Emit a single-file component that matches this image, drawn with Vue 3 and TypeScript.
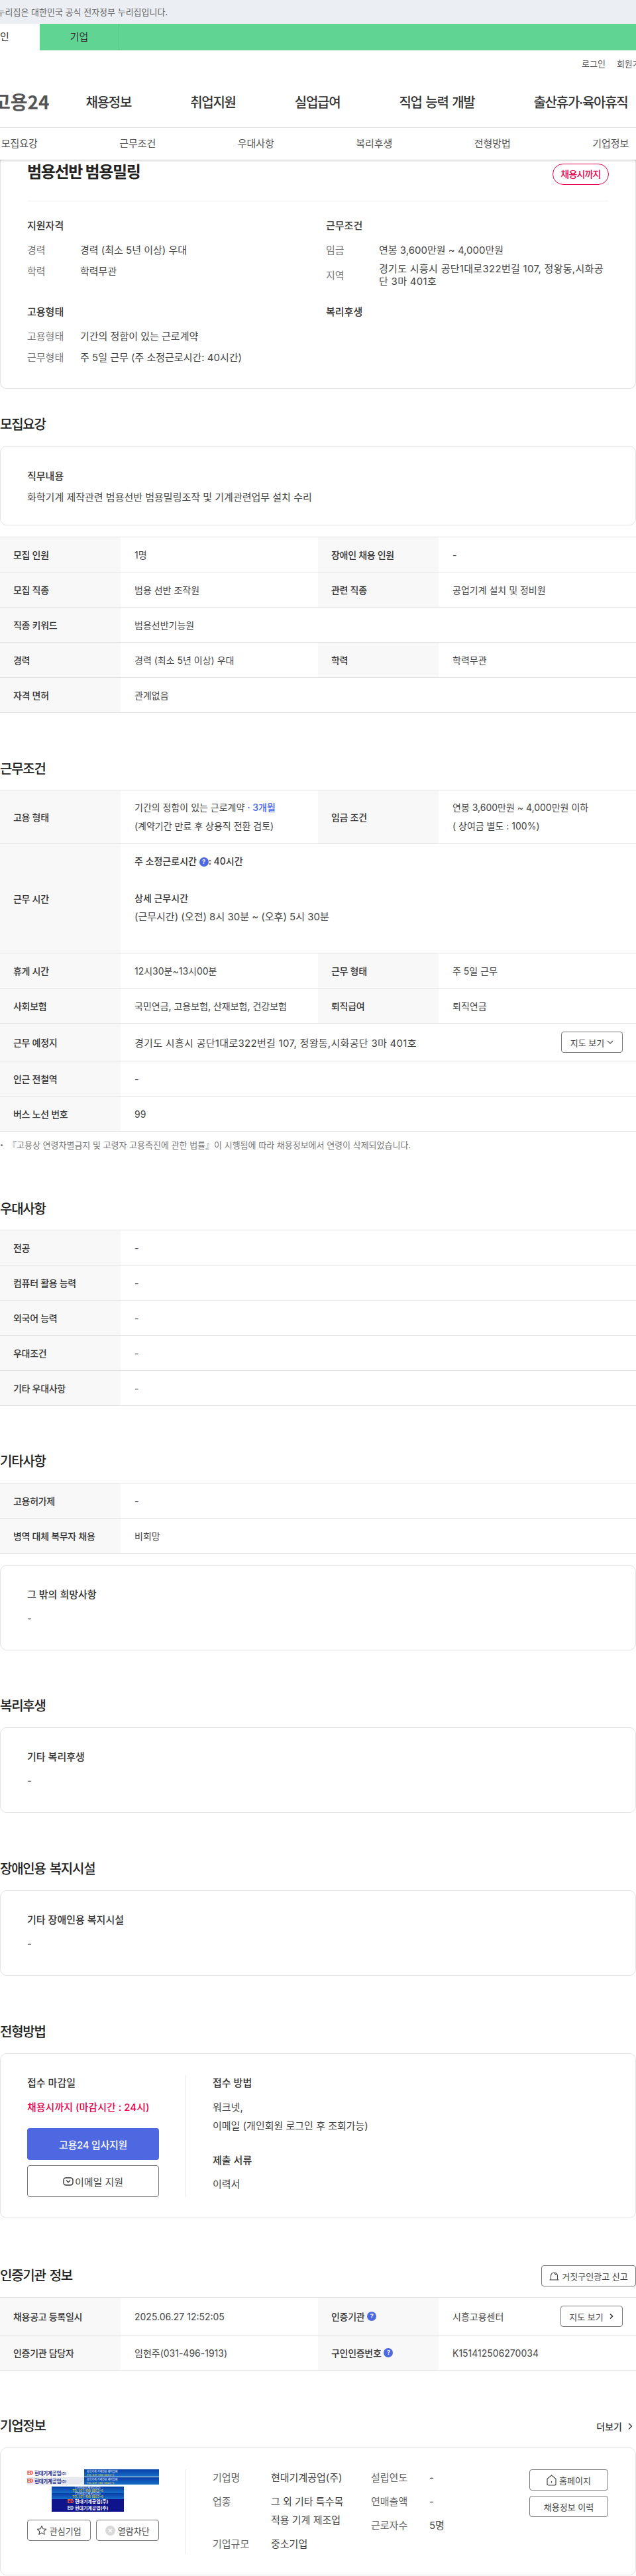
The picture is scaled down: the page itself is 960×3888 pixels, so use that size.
<template>
  <div class="page">
    <div class="notice"><span>이 누리집은 대한민국 공식 전자정부 누리집입니다.</span></div>
    <div class="member-tabs">
      <a class="member-tab active">개인</a>
      <a class="member-tab">기업</a>
    </div>

    <div class="util"><a>로그인</a><a>회원가입</a></div>
    <div class="gnb">
      <span class="logo">고용24</span>
      <a v-for="menu in gnbMenus" :key="menu">{{ menu }}</a>
    </div>
    <div class="anchor-tabs">
      <a v-for="tab in anchorTabs" :key="tab">{{ tab }}</a>
    </div>

    <div class="summary-card">
      <div class="summary-head">
        <h1>범용선반 범용밀링</h1>
        <span class="deadline">채용시까지</span>
      </div>
      <div class="summary-grid">
        <div>
          <h3>지원자격</h3>
          <div class="sum-row"><span>경력</span><p>경력 (최소 5년 이상) 우대</p></div>
          <div class="sum-row"><span>학력</span><p>학력무관</p></div>
        </div>
        <div>
          <h3>근무조건</h3>
          <div class="sum-row"><span>임금</span><p>연봉 3,600만원 ~ 4,000만원</p></div>
          <div class="sum-row multi"><span>지역</span><p>경기도 시흥시 공단1대로322번길 107, 정왕동,시화공단 3마 401호</p></div>
        </div>
        <div>
          <h3>고용형태</h3>
          <div class="sum-row"><span>고용형태</span><p>기간의 정함이 있는 근로계약</p></div>
          <div class="sum-row"><span>근무형태</span><p>주 5일 근무 (주 소정근로시간: 40시간)</p></div>
        </div>
        <div>
          <h3>복리후생</h3>
        </div>
      </div>
    </div>

    <h2 class="sec-title top">모집요강</h2>
    <div class="box box-job">
      <h3>직무내용</h3>
      <p>화학기계 제작관련 범용선반 범용밀링조작 및 기계관련업무 설치 수리</p>
    </div>
    <div class="info-table tbl-gap">
      <div v-for="(row, i) in recruitRows" :key="i" class="info-row">
        <template v-for="cell in row" :key="cell.label">
          <div class="th">{{ cell.label }}</div>
          <div class="td" :class="{ wide: row.length === 1 }">{{ cell.value }}</div>
        </template>
      </div>
    </div>

    <h2 class="sec-title">근무조건</h2>
    <div class="info-table">
      <div class="info-row">
        <div class="th">고용 형태</div>
        <div class="td lines">
          <p>기간의 정함이 있는 근로계약 <b class="period">· 3개월</b></p>
          <p>(계약기간 만료 후 상용직 전환 검토)</p>
        </div>
        <div class="th">임금 조건</div>
        <div class="td lines">
          <p>연봉 3,600만원 ~ 4,000만원 이하</p>
          <p>( 상여금 별도 : 100%)</p>
        </div>
      </div>
      <div class="info-row">
        <div class="th">근무 시간</div>
        <div class="td wide lines">
          <p class="strong">주 소정근로시간 <i class="help">?</i>: 40시간</p>
          <p>&nbsp;</p>
          <p class="strong">상세 근무시간</p>
          <p class="detail-time">(근무시간) (오전) 8시 30분 ~ (오후) 5시 30분</p>
          <p>&nbsp;</p>
        </div>
      </div>
      <div class="info-row">
        <div class="th">휴게 시간</div><div class="td">12시30분~13시00분</div>
        <div class="th">근무 형태</div><div class="td">주 5일 근무</div>
      </div>
      <div class="info-row">
        <div class="th">사회보험</div><div class="td">국민연금, 고용보험, 산재보험, 건강보험</div>
        <div class="th">퇴직급여</div><div class="td">퇴직연금</div>
      </div>
      <div class="info-row">
        <div class="th">근무 예정지</div>
        <div class="td wide between workplace">
          <span class="address">경기도 시흥시 공단1대로322번길 107, 정왕동,시화공단 3마 401호</span>
          <button class="line-btn map-btn">지도 보기
            <svg width="10" height="10" viewBox="0 0 10 10"><path d="M1 3l4 4 4-4" fill="none" stroke="#555" stroke-width="1.2" /></svg>
          </button>
        </div>
      </div>
      <div class="info-row"><div class="th">인근 전철역</div><div class="td wide">-</div></div>
      <div class="info-row"><div class="th">버스 노선 번호</div><div class="td wide">99</div></div>
    </div>
    <p class="law-note">『고용상 연령차별금지 및 고령자 고용촉진에 관한 법률』이 시행됨에 따라 채용정보에서 연령이 삭제되었습니다.</p>

    <h2 class="sec-title after-note">우대사항</h2>
    <div class="info-table">
      <div v-for="row in preferRows" :key="row" class="info-row">
        <div class="th">{{ row }}</div>
        <div class="td wide">-</div>
      </div>
    </div>

    <h2 class="sec-title tight">기타사항</h2>
    <div class="info-table tbl-gap">
      <div class="info-row"><div class="th">고용허가제</div><div class="td wide">-</div></div>
      <div class="info-row"><div class="th">병역 대체 복무자 채용</div><div class="td wide">비희망</div></div>
    </div>
    <div class="box">
      <h3>그 밖의 희망사항</h3>
      <p>-</p>
    </div>

    <h2 class="sec-title tight">복리후생</h2>
    <div class="box">
      <h3>기타 복리후생</h3>
      <p>-</p>
    </div>

    <h2 class="sec-title">장애인용 복지시설</h2>
    <div class="box">
      <h3>기타 장애인용 복지시설</h3>
      <p>-</p>
    </div>

    <h2 class="sec-title">전형방법</h2>
    <div class="box box-apply">
      <div class="apply-left">
        <h3>접수 마감일</h3>
        <p class="close-date">채용시까지 (마감시간 : 24시)</p>
        <button class="apply-btn">고용24 입사지원</button>
        <button class="mail-btn">
          <svg width="16" height="13" viewBox="0 0 16 13" fill="none" stroke="#333" stroke-width="1.4">
            <rect x="1" y="1" width="14" height="11" rx="3.5" />
            <path d="M5 5l3 2.800L11 5" />
          </svg>
          이메일 지원
        </button>
      </div>
      <div class="apply-right">
        <h3>접수 방법</h3>
        <p class="method">워크넷,<br />이메일 (개인회원 로그인 후 조회가능)</p>
        <h3 class="docs">제출 서류</h3>
        <p class="doc-list">이력서</p>
      </div>
    </div>

    <div class="sec-head cert-head">
      <h2>인증기관 정보</h2>
      <button class="line-btn report-btn">
        <svg width="15" height="14" viewBox="0 0 15 14" fill="none" stroke="#444" stroke-width="1.1">
          <path d="M2.500 13V7a5 5 0 0 1 10 0v6" />
          <path d="M0.500 13h14" />
          <path d="M7.500 3.500a3.500 3.500 0 0 1 3 2.500" />
        </svg>
        거짓구인광고 신고
      </button>
    </div>
    <div class="info-table">
      <div class="info-row tall">
        <div class="th">채용공고 등록일시</div><div class="td">2025.06.27 12:52:05</div>
        <div class="th">인증기관 <i class="help big">?</i></div>
        <div class="td between">시흥고용센터
          <button class="line-btn map-btn cert-map">지도 보기
            <svg width="8" height="10" viewBox="0 0 8 10"><path d="M2 1.500L5.500 5 2 8.500" fill="none" stroke="#333" stroke-width="1.600" /></svg>
          </button>
        </div>
      </div>
      <div class="info-row">
        <div class="th">인증기관 담당자</div><div class="td">임현주(031-496-1913)</div>
        <div class="th">구인인증번호 <i class="help big">?</i></div><div class="td">K151412506270034</div>
      </div>
    </div>

    <div class="sec-head corp-head">
      <h2>기업정보</h2>
      <a class="more">더보기
        <svg width="7" height="12" viewBox="0 0 7 12"><path d="M1 1.500L5.500 6 1 10.500" fill="none" stroke="#333" stroke-width="1.300" /></svg>
      </a>
    </div>
    <div class="box box-corp">
      <div class="corp-left">
        <div class="corp-logo">
          <div class="logo-line">
            <span class="logo-white"><b class="ed">ED</b>현대기계공업<small>(주)</small></span>
            <span class="logo-blue"><em>화학기계 기계전문 제작업체</em><u>TEL 031-498-8803~6</u></span>
          </div>
          <div class="logo-line gray">
            <span class="logo-white"><b class="ed">ED</b>현대기계공업<small>(주)</small></span>
            <span class="logo-blue"><em>화학기계 기계전문 제작업체</em><u>TEL 031-498-8803~6</u></span>
          </div>
          <div class="logo-stack">
            <span class="tile"><em>ED현대기계공업(주)</em><u>TEL 031-498-8803~6</u></span>
            <span class="tile"><em>ED현대기계공업(주)</em><u>TEL 031-498-8803~6</u></span>
            <span class="tile navy"><b class="ed">ED</b>현대기계공업(주)</span>
            <span class="tile navy"><b class="ed pale">ED</b>현대기계공업(주)</span>
          </div>
        </div>
        <div class="corp-actions">
          <button class="line-btn">
            <svg width="16" height="16" viewBox="0 0 16 16"><path d="M8 1.500l2 4.300 4.700.6-3.500 3.200.9 4.700L8 11.900l-4.100 2.400.9-4.700L1.300 6.400 6 5.800z" fill="none" stroke="#444" stroke-width="1.100" stroke-linejoin="round" /></svg>
            관심기업
          </button>
          <button class="line-btn">
            <svg width="15" height="15" viewBox="0 0 15 15"><circle cx="7.500" cy="7.500" r="7.500" fill="#d9d9d9" /><path d="M5 5l5 5M10 5l-5 5" stroke="#fff" stroke-width="1.300" /></svg>
            열람차단
          </button>
        </div>
      </div>
      <div class="corp-info">
        <dl>
          <div v-for="item in corpLeft" :key="item.label" class="corp-row">
            <dt>{{ item.label }}</dt><dd>{{ item.value }}</dd>
          </div>
        </dl>
        <dl>
          <div v-for="item in corpRight" :key="item.label" class="corp-row">
            <dt>{{ item.label }}</dt><dd>{{ item.value }}</dd>
          </div>
        </dl>
        <div class="corp-links">
          <button class="line-btn">
            <svg width="15" height="17" viewBox="0 0 15 17" fill="none" stroke="#444" stroke-width="1.200">
              <path d="M1 6.500L7.500 1 14 6.500v7.500a2 2 0 0 1-2 2H3a2 2 0 0 1-2-2z" />
              <path d="M7.500 10v2.500" />
            </svg>
            홈페이지
          </button>
          <button class="line-btn">채용정보 이력</button>
        </div>
      </div>
    </div>
  </div>
</template>

<script setup lang="ts">
interface Cell {
  label: string;
  value: string;
}

const gnbMenus = ['채용정보', '취업지원', '실업급여', '직업 능력 개발', '출산휴가·육아휴직'];
const anchorTabs = ['모집요강', '근무조건', '우대사항', '복리후생', '전형방법', '기업정보'];

const recruitRows: Cell[][] = [
  [{ label: '모집 인원', value: '1명' }, { label: '장애인 채용 인원', value: '-' }],
  [{ label: '모집 직종', value: '범용 선반 조작원' }, { label: '관련 직종', value: '공업기계 설치 및 정비원' }],
  [{ label: '직종 키워드', value: '범용선반기능원' }],
  [{ label: '경력', value: '경력 (최소 5년 이상) 우대' }, { label: '학력', value: '학력무관' }],
  [{ label: '자격 면허', value: '관계없음' }],
];

const preferRows = ['전공', '컴퓨터 활용 능력', '외국어 능력', '우대조건', '기타 우대사항'];

const corpLeft: Cell[] = [
  { label: '기업명', value: '현대기계공업(주)' },
  { label: '업종', value: '그 외 기타 특수목적용 기계 제조업' },
  { label: '기업규모', value: '중소기업' },
];

const corpRight: Cell[] = [
  { label: '설립연도', value: '-' },
  { label: '연매출액', value: '-' },
  { label: '근로자수', value: '5명' },
];
</script>

<style>
html,
body {
  margin: 0;
  background: #fff;
}
</style>

<style scoped>
* {
  box-sizing: border-box;
}

.page {
  width: 960px;
  height: 3888px;
  overflow: hidden;
  font-family: Inter, 'Noto Sans CJK KR', 'Noto Sans', sans-serif;
  font-size: 15px;
  color: #444;
}

h1,
h2,
h3,
p,
dl,
dd {
  margin: 0;
}

button {
  font-family: inherit;
  cursor: pointer;
  background: #fff;
}

i,
em,
u {
  font-style: normal;
  text-decoration: none;
}

/* top */
.notice {
  height: 36px;
  background: #ebeff4;
  font-size: 13px;
  line-height: 36px;
  color: #666;
  white-space: nowrap;
}

.notice span {
  margin-left: -20px;
}

.member-tabs {
  display: flex;
  height: 40px;
  background: #60d593;
}

.member-tab {
  width: 120px;
  line-height: 40px;
  text-align: center;
  font-size: 15px;
  color: #333;
  border-right: 1px solid #56c886;
}

.member-tab.active {
  margin-left: -60px;
  background: #fff;
  border-right: 0;
}

.util {
  display: flex;
  height: 38px;
  padding-left: 878px;
  gap: 17px;
  align-items: center;
  font-size: 13px;
  color: #555;
  white-space: nowrap;
}

.gnb {
  display: flex;
  align-items: center;
  height: 79px;
  border-bottom: 1px solid #eee;
  gap: 89px;
  font-size: 20px;
  font-weight: 500;
  letter-spacing: -1.25px;
  word-spacing: 1.5px;
  color: #333;
  white-space: nowrap;
}

.logo {
  margin-left: -10px;
  margin-right: -34px;
  font-family: 'Noto Sans CJK KR', sans-serif;
  font-size: 28px;
  font-weight: 700;
  letter-spacing: 0;
  color: #555;
}

.anchor-tabs {
  position: relative;
  display: grid;
  grid-template-columns: repeat(6, 178.5px);
  width: 1080px;
  height: 48px;
  margin-left: -60px;
  padding-right: 9px;
  background: #fff;
  box-shadow: 0 1px 3px rgba(0, 0, 0, 0.25);
  font-size: 15px;
  line-height: 48px;
  text-align: center;
  color: #555;
}

/* summary card */
.summary-card {
  height: 346px;
  padding: 6px 40px 0;
  border: 1px solid #e2e2e2;
  border-top: 0;
  border-radius: 0 0 10px 10px;
}

.summary-head {
  display: flex;
  justify-content: space-between;
  align-items: flex-start;
  height: 57px;
  border-bottom: 1px solid #eee;
}

.summary-head h1 {
  margin-top: -3px;
  font-size: 24px;
  font-weight: 700;
  letter-spacing: -1.3px;
  line-height: 32px;
  color: #222;
}

.deadline {
  width: 85px;
  height: 32px;
  border: 1px solid #e6004d;
  border-radius: 16px;
  font-size: 14px;
  font-weight: 500;
  line-height: 30px;
  letter-spacing: -0.8px;
  text-align: center;
  color: #e6004d;
}

.summary-grid {
  display: grid;
  grid-template-columns: 451px 427px;
  grid-template-rows: 105px 93px;
  row-gap: 25px;
  padding-top: 25px;
}

.summary-grid h3 {
  font-size: 15px;
  font-weight: 500;
  line-height: 24px;
  color: #333;
  margin-bottom: 13px;
}

.sum-row {
  display: flex;
  align-items: center;
  min-height: 24px;
  margin-top: 8px;
  line-height: 24px;
}

.sum-row span {
  flex: none;
  width: 80px;
  color: #777;
}

.sum-row.multi {
  margin-top: 6px;
  line-height: 19px;
}

.sum-row.multi p {
  letter-spacing: 0.3px;
}

/* section heads */
.sec-title,
.sec-head h2 {
  height: 30px;
  font-size: 20px;
  font-weight: 500;
  line-height: 30px;
  letter-spacing: -1.25px;
  word-spacing: 2px;
  color: #222;
}

.sec-title {
  margin-top: 70px;
  margin-bottom: 16px;
}

.sec-title.top {
  margin-top: 39px;
}

.sec-title.after-note {
  margin-top: 72px;
}

.sec-title.tight {
  margin-top: 69px;
}

.sec-head {
  display: flex;
  justify-content: space-between;
  align-items: center;
}

/* bordered boxes */
.box {
  height: 129px;
  margin-top: 17px;
  padding: 32px 40px 0;
  border: 1px solid #e2e2e2;
  border-radius: 10px;
}

.box h3 {
  font-size: 15px;
  font-weight: 500;
  line-height: 24px;
  color: #333;
}

.box p {
  margin-top: 12px;
  line-height: 24px;
}

.box-job {
  height: 120px;
  padding-top: 33px;
}

.box-job p {
  margin-top: 8px;
}

/* tables */
.info-table {
  border-top: 1px solid #e2e2e2;
  font-size: 14px;
}

.tbl-gap {
  margin-top: 17px;
}

.info-row {
  display: grid;
  grid-template-columns: 182px 298px 182px 298px;
  border-bottom: 1px solid #e2e2e2;
}

.th,
.td {
  display: flex;
  align-items: center;
  min-height: 52px;
}

.th {
  padding: 0 20px;
  background: #f8f8f8;
  font-size: 14px;
  font-weight: 500;
  letter-spacing: -0.3px;
  color: #333;
}

.td {
  padding: 0 21px;
}

.td.wide {
  grid-column: span 3;
}

.td.lines {
  display: block;
  padding-top: 12px;
  padding-bottom: 12px;
  line-height: 28px;
}

.between {
  justify-content: space-between;
  padding-right: 20px;
}

.workplace {
  min-height: 56px;
  font-size: 15px;
}

.address {
  letter-spacing: 0.3px;
}

.detail-time {
  font-size: 15px;
}

.period {
  font-weight: 500;
  color: #4263eb;
}

.strong {
  font-weight: 500;
  color: #333;
}

.help {
  display: inline-block;
  width: 14px;
  height: 14px;
  border-radius: 50%;
  background: #4d68e0;
  color: #fff;
  font-size: 9px;
  font-weight: 700;
  line-height: 14px;
  letter-spacing: 0;
  text-align: center;
  vertical-align: 1px;
}

.help.big {
  margin-left: 4px;
}

.law-note {
  position: relative;
  margin-top: 10px;
  padding-left: 12px;
  font-size: 13px;
  line-height: 20px;
  color: #777;
}

.law-note::before {
  content: '';
  position: absolute;
  left: 1px;
  top: 9px;
  width: 3px;
  height: 3px;
  border-radius: 50%;
  background: #777;
}

/* buttons */
.line-btn {
  display: inline-flex;
  align-items: center;
  justify-content: center;
  gap: 4px;
  height: 32px;
  border: 1px solid #777;
  border-radius: 4px;
  font-size: 13px;
  color: #444;
  white-space: nowrap;
}

.map-btn {
  width: 93px;
}

.cert-map {
  width: 94px;
  gap: 8px;
}

/* apply */
.box-apply {
  display: flex;
  height: 249px;
}

.apply-left {
  display: flex;
  flex-direction: column;
  flex: none;
  width: 240px;
  padding-right: 40px;
  border-right: 1px solid #e8e8e8;
  height: 184px;
}

.box .close-date {
  margin-top: 11px;
  line-height: 28px;
  font-weight: 500;
  color: #e6004d;
}

.apply-btn {
  flex: none;
  height: 48px;
  margin-top: 17px;
  border: 0;
  border-radius: 4px;
  background: #4d68e0;
  color: #fff;
  font-size: 15px;
  font-weight: 500;
  letter-spacing: -0.3px;
}

.mail-btn {
  display: flex;
  flex: none;
  align-items: center;
  justify-content: center;
  gap: 2px;
  height: 48px;
  margin-top: 8px;
  border: 1px solid #777;
  border-radius: 4px;
  color: #444;
  font-size: 15px;
}

.apply-right {
  padding-left: 40px;
}

.box .method {
  margin-top: 11px;
  line-height: 28px;
}

.box-apply .docs {
  margin-top: 26px;
}

.box .doc-list {
  margin-top: 10px;
  line-height: 28px;
}

/* cert */
.cert-head {
  margin-top: 71px;
  height: 32px;
  margin-bottom: 16px;
}

.report-btn {
  width: 143px;
  gap: 4px;
}

.info-row.tall .th,
.info-row.tall .td {
  min-height: 56px;
}

/* corp */
.corp-head {
  margin-top: 69px;
}

.more {
  display: flex;
  align-items: center;
  gap: 9px;
  margin-right: 5px;
  font-size: 14px;
  font-weight: 500;
  color: #333;
}

.box-corp {
  display: flex;
  height: 193px;
}

.corp-left {
  flex: none;
  width: 240px;
  height: 128px;
  padding-right: 40px;
  border-right: 1px solid #e8e8e8;
}

.corp-logo {
  height: 64px;
  font-size: 6px;
  white-space: nowrap;
  overflow: hidden;
}

.logo-line {
  display: flex;
  height: 11px;
  margin-bottom: 1px;
}

.logo-white {
  display: flex;
  align-items: center;
  width: 86px;
  font-weight: 700;
  font-size: 7.500px;
  letter-spacing: -0.2px;
  color: #1a2a8a;
  background: #fff;
}

.logo-white small {
  font-size: 5px;
}

.logo-line.gray .logo-white {
  background: #e6e8ee;
}

.ed {
  margin-right: 2px;
  color: #f0523f;
  font-size: 7px;
}

.ed.pale {
  color: #c5cbe6;
}

.logo-blue {
  display: flex;
  flex-direction: column;
  justify-content: center;
  width: 113px;
  padding-left: 4px;
  background: linear-gradient(#0a3da8, #1670c9);
  font-size: 4px;
  line-height: 5px;
  color: #fff;
}

.logo-blue u {
  color: #e8d93a;
}

.logo-stack {
  display: grid;
  width: 109px;
  margin: 3px 0 0 37px;
}

.tile {
  display: flex;
  flex-direction: column;
  justify-content: center;
  align-items: center;
  height: 9.500px;
  background: linear-gradient(#0a3da8, #1670c9);
  font-size: 4.500px;
  line-height: 4.800px;
  color: #fff;
}

.tile u {
  color: #e8d93a;
}

.tile.navy {
  flex-direction: row;
  background: #10148c;
  font-size: 7px;
  font-weight: 700;
}

.corp-actions {
  display: flex;
  gap: 8px;
  margin-top: 12px;
}

.corp-actions .line-btn {
  flex: 1;
  height: 32px;
}

.corp-info {
  display: flex;
  flex: 1;
  padding-left: 40px;
}

.corp-info dl {
  display: flex;
  flex-direction: column;
  gap: 8px;
  width: 239px;
  margin-top: -1px;
  flex: none;
}

.corp-row {
  display: flex;
  line-height: 28px;
}

.corp-row dt {
  flex: none;
  width: 88px;
  color: #666;
}

.corp-info dl:first-child dd {
  padding-right: 32px;
}

.corp-links {
  display: flex;
  flex-direction: column;
  gap: 8px;
  width: 119px;
  flex: none;
}

.corp-links .line-btn {
  height: 32px;
}
</style>
